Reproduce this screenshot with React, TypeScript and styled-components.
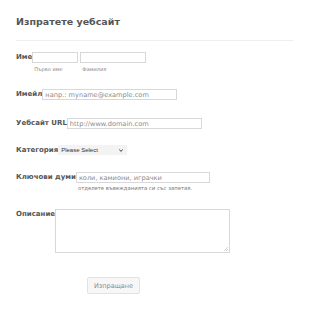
import React from "react";
import styled, { createGlobalStyle } from "styled-components";

const GlobalStyle = createGlobalStyle`
  html, body {
    margin: 0;
    padding: 0;
    background: #fff;
  }
  body {
    font-family: "DejaVu Sans", Verdana, sans-serif;
    color: #555;
  }
`;

const Page = styled.div`
  width: 310px;
  height: 311px;
  padding: 15px 17px 0 16px;
  box-sizing: border-box;
`;

const Title = styled.h2`
  margin: 0;
  font-size: 9.5px;
  font-weight: bold;
  color: #555;
  line-height: 14px;
  padding-bottom: 11px;
  border-bottom: 1px solid #eee;
`;

const Row = styled.div<{ $top: number }>`
  display: flex;
  align-items: flex-start;
  margin-top: ${(p) => p.$top}px;
`;

const Label = styled.label`
  font-size: 7px;
  font-weight: bold;
  color: #555;
  line-height: 10px;
  white-space: nowrap;
`;

const Field = styled.div`
  display: flex;
  flex-direction: column;
`;

const NameFields = styled.div`
  display: flex;
  gap: 2px;
`;

const SubLabel = styled.span`
  font-size: 5px;
  line-height: 6px;
  color: #888;
  margin-top: 3px;
  padding-left: 2px;
`;

const Input = styled.input<{ $w: number }>`
  width: ${(p) => p.$w}px;
  height: 11px;
  box-sizing: border-box;
  border: 1px solid #d8d8d8;
  padding: 0 2px;
  margin: 0;
  font-family: "DejaVu Sans", Verdana, sans-serif;
  font-size: 6.6px;
  color: #555;
  outline: none;
  &::placeholder {
    color: #8a8a8a;
  }
`;

const SelectBox = styled.div`
  position: relative;
  width: 69px;
  height: 10px;
  line-height: 10px;
`;

const Select = styled.select`
  display: block;
  width: 100%;
  height: 10px;
  box-sizing: border-box;
  margin: 0;
  border: none;
  border-radius: 0;
  appearance: none;
  background: #f3f3f3;
  color: #333;
  font-family: "Liberation Sans", Arial, sans-serif;
  font-size: 6px;
  line-height: 10px;
  padding: 0 0 0 3px;
  outline: none;
`;

const Chevron = styled.svg`
  position: absolute;
  right: 4px;
  top: 4px;
  width: 4px;
  height: 3px;
  pointer-events: none;
`;

const Hint = styled.span`
  font-size: 5.3px;
  line-height: 6px;
  color: #777;
  margin-top: 2px;
  padding-left: 2px;
`;

const AreaBox = styled.div`
  position: relative;
  width: 175px;
  height: 44px;
`;

const TextArea = styled.textarea`
  display: block;
  width: 100%;
  height: 100%;
  box-sizing: border-box;
  border: 1px solid #d8d8d8;
  margin: 0;
  padding: 2px;
  resize: none;
  outline: none;
`;

const Grip = styled.svg`
  position: absolute;
  right: 2px;
  bottom: 2px;
  width: 4px;
  height: 4px;
  pointer-events: none;
`;

const ButtonRow = styled.div`
  display: flex;
  margin-top: 24px;
  padding-left: 71px;
`;

const SubmitButton = styled.button`
  width: 53px;
  height: 17px;
  border: 1px solid #e2e2e2;
  border-radius: 2px;
  background: #f7f7f7;
  color: #888;
  font-family: "DejaVu Sans", Verdana, sans-serif;
  font-size: 6.5px;
  padding: 0;
`;

export default function App() {
  return (
    <Page>
      <GlobalStyle />
      <Title>Изпратете уебсайт</Title>
      <Row $top={11}>
        <Label>Име</Label>
        <NameFields>
          <Field>
            <Input $w={46} />
            <SubLabel>Първо име</SubLabel>
          </Field>
          <Field>
            <Input $w={66} />
            <SubLabel>Фамилия</SubLabel>
          </Field>
        </NameFields>
      </Row>
      <Row $top={17}>
        <Label>Имейл</Label>
        <Input $w={135} placeholder="напр.: myname@example.com" />
      </Row>
      <Row $top={18}>
        <Label>Уебсайт URL</Label>
        <Input $w={135} placeholder="http://www.domain.com" />
      </Row>
      <Row $top={16}>
        <Label>Категория</Label>
        <SelectBox>
          <Select defaultValue="">
            <option value="">Please Select</option>
          </Select>
          <Chevron viewBox="0 0 4 3">
            <path d="M0.3 0.4 L2 2.4 L3.7 0.4" fill="none" stroke="#333" strokeWidth="0.9" />
          </Chevron>
        </SelectBox>
      </Row>
      <Row $top={17}>
        <Label>Ключови думи</Label>
        <Field>
          <Input $w={134} placeholder="коли, камиони, играчки" />
          <Hint>отделете въвежданията си със запетая.</Hint>
        </Field>
      </Row>
      <Row $top={18}>
        <Label>Описание</Label>
        <AreaBox>
          <TextArea />
          <Grip viewBox="0 0 4 4">
            <path d="M4 0 L0 4 M4 2 L2 4" stroke="#bbb" strokeWidth="0.6" />
          </Grip>
        </AreaBox>
      </Row>
      <ButtonRow>
        <SubmitButton>Изпращане</SubmitButton>
      </ButtonRow>
    </Page>
  );
}
